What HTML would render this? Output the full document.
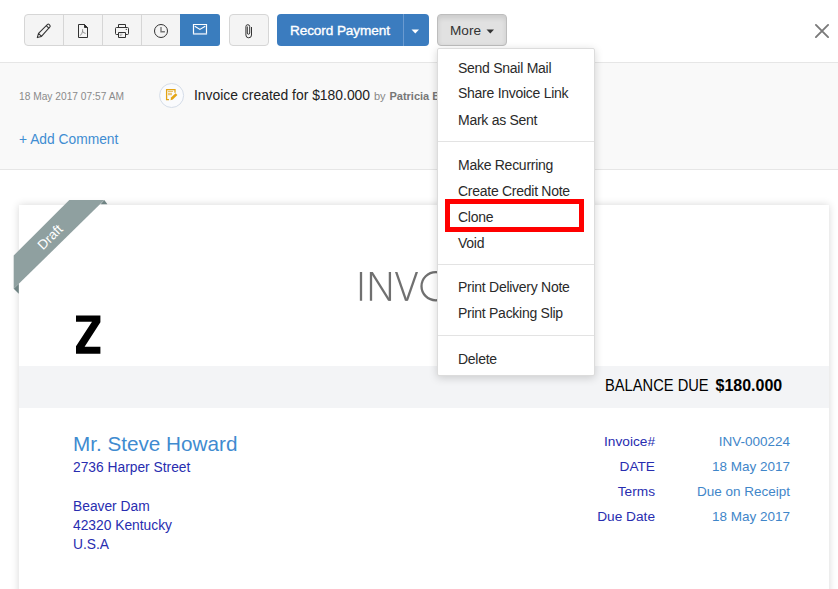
<!DOCTYPE html>
<html><head><meta charset="utf-8">
<style>
*{box-sizing:border-box;margin:0;padding:0}
html,body{width:838px;height:589px;overflow:hidden;background:#fff;font-family:"Liberation Sans",sans-serif;position:relative}
.abs{position:absolute;white-space:nowrap}
.t{position:absolute;white-space:nowrap;line-height:1}
.tb{position:absolute;top:14px;height:32px;background:#f4f4f4;border:1px solid #d6d6d6}
.grp{left:24px;width:196px;border-radius:4px;overflow:hidden}
.grp .b{position:absolute;top:0;width:39px;height:30px;border-right:1px solid #d6d6d6}
.attach{left:229px;width:40px;border-radius:4px}
.rp{position:absolute;left:277px;top:14px;width:152px;height:32px;background:#3b7cbf;border-radius:4px;color:#fff}
.more{position:absolute;left:437px;top:14px;width:70px;height:32px;background:#e1e1e1;border:1px solid #bdbdbd;border-radius:4px;color:#333;box-shadow:inset 0 3px 5px rgba(0,0,0,.10)}
.band{position:absolute;left:0;top:62px;width:838px;height:108px;background:#f9f9f9;border-top:1px solid #e6e6e6;border-bottom:1px solid #e6e6e6}
.card{position:absolute;left:19px;top:205px;width:810px;height:420px;background:#fff;box-shadow:0 0 8px rgba(0,0,0,.16)}
.menu{position:absolute;left:437px;top:48px;width:158px;height:328px;background:#fff;border:1px solid #dcdcdc;border-radius:2px;box-shadow:0 2px 9px rgba(0,0,0,.17)}
.mi{position:absolute;left:458px;font-size:14px;letter-spacing:-0.27px;color:#2a2a2a;white-space:nowrap;line-height:1}
.sep{position:absolute;left:438px;width:156px;height:1px;background:#e3e3e3}
.addr{color:#282db0;font-size:13.8px}
.lbl{color:#282db0;font-size:13.7px;text-align:right;width:120px}
.val{color:#3f86c9;font-size:13.5px;text-align:right;width:140px}
</style></head><body>

<!-- toolbar -->
<div class="tb grp">
  <div class="b" style="left:0"></div><div class="b" style="left:39px"></div><div class="b" style="left:78px"></div><div class="b" style="left:117px;border-right:0"></div>
</div>
<div class="abs" style="left:180px;top:14px;width:40px;height:32px;background:#3a7dbe;border-radius:0 3px 3px 0"></div>
<svg class="abs" style="left:30px;top:18px" width="30" height="24" viewBox="0 0 30 24" fill="none" stroke="#333" stroke-width="1.05" stroke-linejoin="round">
  <path d="M7.3 19.6 L8.5 15.43 L17.55 6.38 Q18.3 5.7 19.0 6.4 L19.9 7.3 Q20.6 8.1 19.9 8.8 L11.47 18.4 Z M8.5 15.43 L11.47 18.4 M16.28 7.65 L19.25 10.62"/>
</svg>
<svg class="abs" style="left:70px;top:18px" width="30" height="24" viewBox="0 0 30 24" fill="none" stroke="#333" stroke-width="1">
  <path d="M8.5 6.5 H14.5 L17.5 9.5 V19.5 H8.5 Z"/>
  <path d="M14.5 6.5 L17.5 9.5 H14.5 Z" fill="#222"/>
  <path d="M12.6 11.2 V13.2 Q13 15 15.6 15.4 M12.6 13.2 Q12.4 15.3 10.2 17.6" stroke="#777" stroke-width="0.8"/>
</svg>
<svg class="abs" style="left:108px;top:18px" width="30" height="24" viewBox="0 0 30 24" fill="none" stroke="#333" stroke-width="1">
  <path d="M10.5 9.5 V6.5 H17.5 V9.5"/>
  <path d="M10.5 16.5 H8.5 Q7.5 16.5 7.5 15.5 V10.5 Q7.5 9.5 8.5 9.5 H19.5 Q20.5 9.5 20.5 10.5 V15.5 Q20.5 16.5 19.5 16.5 H17.5"/>
  <path d="M10.5 14.5 H17.5 V19.5 H10.5 Z"/>
  <circle cx="18.3" cy="11.4" r="0.6" fill="#333" stroke="none"/>
  <path d="M11.8 16.2 H14.5 M11.8 17.6 H13.5" stroke="#888" stroke-width="0.7"/>
</svg>
<svg class="abs" style="left:147px;top:18px" width="30" height="24" viewBox="0 0 30 24" fill="none" stroke="#333" stroke-width="1">
  <circle cx="14" cy="13" r="6.5"/>
  <path d="M14 9 V13.8 H17.9" stroke="#777" stroke-width="1.4"/>
</svg>
<svg class="abs" style="left:185px;top:18px" width="30" height="24" viewBox="0 0 30 24" fill="none" stroke="#fff" stroke-width="1.2">
  <path d="M8.5 6.5 H21.5 V16 H8.5 Z"/>
  <path d="M10.2 8.4 L14.9 11.4 L19.8 8.4" stroke-linecap="round"/>
  <path d="M8.7 15.6 H21.5" stroke="#b8d0ea" stroke-width="1.3"/>
</svg>
<div class="tb attach"></div>
<svg class="abs" style="left:234px;top:18px" width="30" height="24" viewBox="0 0 30 24" fill="none" stroke="#333" stroke-width="1">
  <path d="M17.5 9 V17 A2.8 2.8 0 0 1 11.9 17 V8.6 A1.9 1.9 0 0 1 15.7 8.6 V15 A1.2 1.2 0 0 1 13.3 15 V8.5"/>
</svg>

<div class="rp">
  <div class="abs" style="left:126px;top:0;width:1px;height:32px;background:#6a9ad0"></div>
  <svg class="abs" style="left:134px;top:15px" width="9" height="5" viewBox="0 0 9 5"><path d="M0.5 0.5 H8 L4.25 4.5 Z" fill="#fff"/></svg>
</div>
<div class="t" style="left:290px;top:23.5px;font-size:13.6px;color:#fff;-webkit-text-stroke:0.35px #fff;letter-spacing:-0.1px">Record Payment</div>
<div class="more">
  <svg class="abs" style="left:47.5px;top:14px" width="9" height="5" viewBox="0 0 9 5"><path d="M0.5 0.5 H8 L4.25 4.5 Z" fill="#333"/></svg>
</div>
<div class="t" style="left:450px;top:23.5px;font-size:13.6px;color:#333">More</div>

<svg class="abs" style="left:812px;top:21px" width="20" height="20" viewBox="0 0 20 20"><path d="M3.9 3.9L16.1 16.1M16.1 3.9L3.9 16.1" stroke="#7a7a7a" stroke-width="1.9" stroke-linecap="round"/></svg>

<!-- activity band -->
<div class="band"></div>
<div class="t" style="left:19px;top:90px;font-size:11.6px;color:#8a8a8a;transform:scaleX(0.88);transform-origin:0 0">18 May 2017 07:57 AM</div>
<svg class="abs" style="left:156px;top:80px" width="32" height="32" viewBox="0 0 32 32">
  <circle cx="15.6" cy="15.5" r="12" fill="#fafbfd" stroke="#d5dde8" stroke-width="1"/>
  <path d="M13 19.6 H10.6 V9.6 H19 V12.8" fill="none" stroke="#e3a414" stroke-width="1.3"/>
  <path d="M12 11.4 H17 M12 13.3 H16 M12 14.7 H16" stroke="#e3a414" stroke-width="0.9" opacity="0.8"/>
  <path d="M14.6 20.2 L15 17.6 L19.6 13.2 L21.4 15 L16.8 19.5 Z" fill="#e3a414"/>
</svg>
<div class="t" style="left:194px;top:88.7px;font-size:13.9px;color:#222">Invoice created for $180.000 <span style="font-size:11px;color:#888">by</span> <span style="font-size:11px;color:#777;font-weight:bold">Patricia B</span></div>
<div class="t" style="left:19px;top:132.5px;font-size:13.8px;color:#408dd2">+ Add Comment</div>

<!-- invoice card -->
<div class="card"></div>
<svg class="abs" style="left:340px;top:260px" width="120" height="50" viewBox="340 260 120 50" fill="none" stroke="#707070" stroke-width="2.3">
  <path d="M361 271.9 V300.7 M371 271.9 V300.7 M389.9 271.9 V300.7"/>
  <g fill="#707070" stroke="none">
  <polygon points="370.1,271.9 372.82,271.9 390.8,300.7 388.08,300.7"/>
  <polygon points="394.97,271.9 397.41,271.9 407.42,300.7 404.98,300.7"/>
  <polygon points="415.59,271.9 418.03,271.9 408.02,300.7 405.58,300.7"/>
  </g>
  <ellipse cx="435.8" cy="286.2" rx="14.3" ry="14.1"/>
</svg>
<div class="abs" style="left:19px;top:366px;width:810px;height:42px;background:#f3f4f6"></div>
<div class="t" style="left:605px;top:377.8px;font-size:16.6px;color:#000;transform:scaleX(0.885);transform-origin:0 0">BALANCE DUE</div>
<div class="t" style="left:715.5px;top:378px;font-size:16px;color:#000;font-weight:bold">$180.000</div>
<div class="t" style="left:73px;top:433.5px;font-size:20.7px;color:#3f8bd0">Mr. Steve Howard</div>
<div class="t addr" style="left:73px;top:460.5px">2736 Harper Street</div>
<div class="t addr" style="left:73px;top:499.5px">Beaver Dam</div>
<div class="t addr" style="left:73px;top:518.5px">42320 Kentucky</div>
<div class="t addr" style="left:73px;top:537.5px">U.S.A</div>

<div class="t lbl" style="left:535px;top:434.7px">Invoice#</div>
<div class="t lbl" style="left:535px;top:459.7px">DATE</div>
<div class="t lbl" style="left:535px;top:484.7px">Terms</div>
<div class="t lbl" style="left:535px;top:509.7px">Due Date</div>
<div class="t val" style="left:650px;top:434.7px">INV-000224</div>
<div class="t val" style="left:650px;top:459.7px">18 May 2017</div>
<div class="t val" style="left:650px;top:484.7px">Due on Receipt</div>
<div class="t val" style="left:650px;top:509.7px">18 May 2017</div>

<!-- Z logo -->
<svg class="abs" style="left:70px;top:310px" width="36" height="50" viewBox="70 310 36 50">
  <polygon points="76,315.5 100.4,315.5 100.4,322.3 84.6,346.8 100.4,346.8 100.4,353.7 76,353.7 76,346.2 92,321.8 76,321.8" fill="#000"/>
</svg>

<!-- Draft ribbon -->
<svg class="abs" style="left:0;top:190px" width="120" height="120" viewBox="0 190 120 120">
  <polygon points="104.3,200.1 107.4,204.2 100.6,204.2" fill="#6f8383"/>
  <polygon points="13.7,288.8 18.8,293.8 18.8,283.8" fill="#6f8383"/>
  <polygon points="69.3,200.1 104.3,200.1 13.7,288.8 13.7,255.6" fill="#8fa0a0"/>
  <text x="0" y="0" transform="translate(50.8,237.8) rotate(-45)" text-anchor="middle" dominant-baseline="middle" font-family="Liberation Sans" font-size="13.4" fill="#fff">Draft</text>
</svg>

<!-- dropdown menu -->
<div class="menu"></div>
<div class="mi" style="top:61px">Send Snail Mail</div>
<div class="mi" style="top:86px">Share Invoice Link</div>
<div class="mi" style="top:112.5px">Mark as Sent</div>
<div class="sep" style="top:141px"></div>
<div class="mi" style="top:157.5px">Make Recurring</div>
<div class="mi" style="top:183.5px">Create Credit Note</div>
<div class="mi" style="top:210px">Clone</div>
<div class="mi" style="top:236px">Void</div>
<div class="sep" style="top:264px"></div>
<div class="mi" style="top:280px">Print Delivery Note</div>
<div class="mi" style="top:306px">Print Packing Slip</div>
<div class="sep" style="top:335px"></div>
<div class="mi" style="top:351.5px">Delete</div>
<div class="abs" style="left:444.5px;top:199px;width:139px;height:33px;border:5px solid #f00"></div>

</body></html>
